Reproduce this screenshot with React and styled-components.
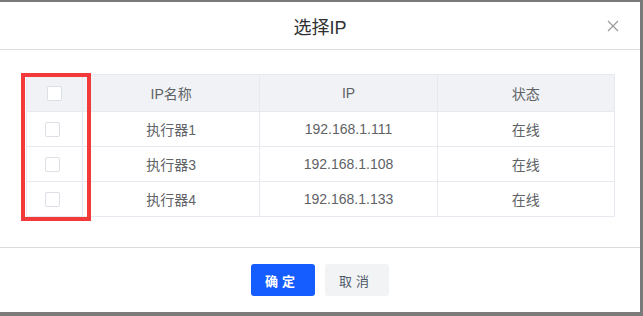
import styled, { createGlobalStyle } from "styled-components";

const GlobalStyle = createGlobalStyle`
   html, body {
      margin: 0;
      padding: 0;
      background: #7a7a7a;
      font-family: "Liberation Sans", "Noto Sans CJK SC", sans-serif;
   }
`;

const Dialog = styled.div`
   width: 640px;
   height: 310px;
   margin-top: 2px;
   background: #fff;
   display: flex;
   flex-direction: column;
`;

const Header = styled.div`
   height: 47px;
   border-bottom: 1px solid #dcdcdc;
   display: flex;
   align-items: center;
   justify-content: center;
   position: relative;
`;

const Title = styled.h2`
   margin: 0;
   font-size: 18px;
   font-weight: 400;
   color: #303133;
`;

const CloseButton = styled.button`
   position: absolute;
   right: 20px;
   top: 17px;
   width: 14px;
   height: 14px;
   padding: 0;
   border: none;
   background: none;
   display: flex;
   cursor: pointer;
`;

const Body = styled.div`
   flex: 1;
   padding: 24px 25px 0 26px;
`;

const TableWrap = styled.div`
   position: relative;
`;

const Table = styled.table`
   width: 100%;
   border-collapse: collapse;
   table-layout: fixed;
   font-size: 14px;
   color: #606266;
`;

const Th = styled.th`
   height: 36px;
   padding: 0;
   font-weight: 400;
   background: #f0f2f5;
   border: 1px solid #e6e9f0;
   width: ${(p) => p.$w || "auto"};
`;

const Td = styled.td`
   height: 34px;
   padding: 0;
   text-align: center;
   border: 1px solid #e6e9f0;
`;

const Check = styled.span`
   display: inline-block;
   width: 13px;
   height: 13px;
   border: 1px solid #dcdfe6;
   border-radius: 2px;
   background: #fff;
   vertical-align: middle;
   margin-left: ${(p) => p.$shift || 0}px;
`;

const Highlight = styled.div`
   position: absolute;
   left: -5px;
   top: -1px;
   width: 70px;
   height: 148px;
   box-sizing: border-box;
   border: 4px solid #f23a3a;
   pointer-events: none;
`;

const Footer = styled.div`
   height: 65px;
   border-top: 1px solid #dcdcdc;
   display: flex;
   justify-content: center;
   align-items: flex-start;
   padding-top: 16px;
   box-sizing: border-box;
   gap: 10px;
`;

const Button = styled.button`
   width: 64px;
   height: 32px;
   border: none;
   border-radius: 3px;
   font-family: "Noto Sans CJK SC", sans-serif;
   font-size: 13px;
   letter-spacing: 4px;
   padding-left: 4px;
   background: ${(p) => (p.$primary ? "#165dff" : "#f2f3f5")};
   color: ${(p) => (p.$primary ? "#fff" : "#4e5969")};
   font-weight: ${(p) => (p.$primary ? 600 : 400)};
`;

const rows = [
   { name: "执行器1", ip: "192.168.1.111", status: "在线" },
   { name: "执行器3", ip: "192.168.1.108", status: "在线" },
   { name: "执行器4", ip: "192.168.1.133", status: "在线" },
];

export default function App() {
   return (
      <>
         <GlobalStyle />
         <Dialog>
            <Header>
               <Title>选择IP</Title>
               <CloseButton aria-label="close">
                  <svg width="14" height="14" viewBox="0 0 14 14">
                     <path d="M2 2 L12 12 M12 2 L2 12" stroke="#9a9a9a" strokeWidth="1.2" />
                  </svg>
               </CloseButton>
            </Header>
            <Body>
               <TableWrap>
                  <Table>
                     <thead>
                        <tr>
                           <Th $w="55px"><Check $shift={0} /></Th>
                           <Th>IP名称</Th>
                           <Th>IP</Th>
                           <Th>状态</Th>
                        </tr>
                     </thead>
                     <tbody>
                        {rows.map((r) => (
                           <tr key={r.ip}>
                              <Td><Check $shift={-4} /></Td>
                              <Td>{r.name}</Td>
                              <Td>{r.ip}</Td>
                              <Td>{r.status}</Td>
                           </tr>
                        ))}
                     </tbody>
                  </Table>
                  <Highlight />
               </TableWrap>
            </Body>
            <Footer>
               <Button $primary>确定</Button>
               <Button>取消</Button>
            </Footer>
         </Dialog>
      </>
   );
}
